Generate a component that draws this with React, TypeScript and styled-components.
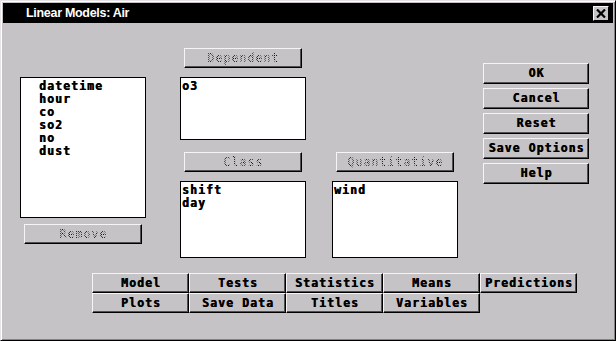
import React from "react";
import styled, { createGlobalStyle, css } from "styled-components";

const Global = createGlobalStyle`
  html, body { margin: 0; padding: 0; background: #c6c3c6; }
  * { box-sizing: border-box; }
`;

const FACE = "#c6c3c6";
const MONO = `"DejaVu Sans Mono", "Liberation Mono", monospace`;

const heavy = css`
  font-weight: bold;
  text-shadow: 0.6px 0 0 #000;
`;

const Window = styled.div`
  width: 616px;
  height: 341px;
  background: ${FACE};
  border-style: solid;
  border-width: 1px;
  border-color: #e7e3e7 #000 #000 #e7e3e7;
  box-shadow: inset 1px 1px 0 #ffffff, inset -1px -1px 0 #848284;
  padding: 2px;
  display: flex;
  flex-direction: column;
`;

const TitleBar = styled.div`
  height: 20px;
  background: #000;
  display: flex;
  align-items: center;
  justify-content: space-between;
  padding: 0 4px 0 23px;
`;

const Title = styled.span`
  color: #fff;
  font-family: "Liberation Sans", Arial, sans-serif;
  font-weight: bold;
  font-size: 12.5px;
  letter-spacing: -0.3px;
`;

const CloseBtn = styled.div`
  width: 16px;
  height: 15px;
  background: ${FACE};
  border-style: solid;
  border-width: 1px;
  border-color: #f7f3f7 #000 #000 #f7f3f7;
  display: flex;
  align-items: center;
  justify-content: center;
`;

const Client = styled.div`
  flex: 1;
  padding: 25px 0 0 17px;
  display: flex;
  flex-direction: column;
`;

const MainRow = styled.div`
  display: flex;
  align-items: flex-start;
`;

const Column = styled.div<{ $ml?: number; $pt?: number; $w: number }>`
  display: flex;
  flex-direction: column;
  align-items: center;
  width: ${(p) => p.$w}px;
  margin-left: ${(p) => p.$ml ?? 0}px;
  padding-top: ${(p) => p.$pt ?? 0}px;
`;

const Button = styled.div<{ $w: number; $h?: number; $mt?: number; $disabled?: boolean }>`
  width: ${(p) => p.$w}px;
  height: ${(p) => p.$h ?? 20}px;
  margin-top: ${(p) => p.$mt ?? 0}px;
  background: ${FACE};
  border-style: solid;
  border-width: 1px;
  border-color: #f7f3f7 #000 #000 #f7f3f7;
  box-shadow: inset -1px -1px 0 #525152;
  display: flex;
  align-items: center;
  justify-content: center;
  font-family: ${MONO};
  font-size: 11.5px;
  letter-spacing: 1.07px;
  padding-left: 1px;
  line-height: 13px;
  color: #000;
  white-space: pre;
  ${(p) => (p.$disabled ? "font-weight: normal;" : heavy)}
`;

const Stipple = styled.span`
  background: repeating-conic-gradient(#1a191a 0 25%, transparent 0 50%) 0 0 / 2px 2px;
  -webkit-background-clip: text;
  background-clip: text;
  color: transparent;
`;

const ListBox = styled.div<{ $h: number; $mt?: number; $indent?: number }>`
  width: 126px;
  height: ${(p) => p.$h}px;
  margin-top: ${(p) => p.$mt ?? 0}px;
  background: #fff;
  border: 1px solid #000;
  padding: 2px 0 0 ${(p) => p.$indent ?? 1}px;
  font-family: ${MONO};
  font-size: 11.5px;
  letter-spacing: 1.07px;
  line-height: 13px;
  color: #000;
  ${heavy}
`;

const Item = styled.div`
  white-space: pre;
`;

const Tabs = styled.div`
  margin: 15px 0 0 72px;
  display: grid;
  grid-template-columns: repeat(5, 97px);
  grid-auto-rows: 20px;
`;

const leftVars = ["datetime", "hour", "co", "so2", "no", "dust"];
const actions = ["OK", "Cancel", "Reset", "Save Options", "Help"];
const tabs = ["Model", "Tests", "Statistics", "Means", "Predictions", "Plots", "Save Data", "Titles", "Variables"];

export default function App() {
  return (
    <>
      <Global />
      <Window>
        <TitleBar>
          <Title>Linear Models: Air</Title>
          <CloseBtn>
            <svg width="10" height="9" viewBox="0 0 10 9">
              <path d="M1 0.5 L9 8.5 M9 0.5 L1 8.5" stroke="#000" strokeWidth="2.2" />
            </svg>
          </CloseBtn>
        </TitleBar>
        <Client>
          <MainRow>
            <Column $w={126} $pt={29}>
              <ListBox $h={141} $indent={18}>
                {leftVars.map((v) => (
                  <Item key={v}>{v}</Item>
                ))}
              </ListBox>
              <Button $w={118} $mt={6} $disabled>
                <Stipple>Remove</Stipple>
              </Button>
            </Column>
            <Column $w={126} $ml={34}>
              <Button $w={118} $disabled>
                <Stipple>Dependent</Stipple>
              </Button>
              <ListBox $h={63} $mt={9}>
                <Item>o3</Item>
              </ListBox>
              <Button $w={118} $mt={12} $disabled>
                <Stipple>Class</Stipple>
              </Button>
              <ListBox $h={77} $mt={9}>
                <Item>shift</Item>
                <Item>day</Item>
              </ListBox>
            </Column>
            <Column $w={126} $ml={26} $pt={104}>
              <Button $w={118} $disabled>
                <Stipple>Quantitative</Stipple>
              </Button>
              <ListBox $h={77} $mt={9}>
                <Item>wind</Item>
              </ListBox>
            </Column>
            <Column $w={106} $ml={25} $pt={15}>
              {actions.map((a, i) => (
                <Button key={a} $w={106} $h={21} $mt={i === 0 ? 0 : 4}>
                  {a}
                </Button>
              ))}
            </Column>
          </MainRow>
          <Tabs>
            {tabs.map((t) => (
              <Button key={t} $w={97}>
                {t}
              </Button>
            ))}
          </Tabs>
        </Client>
      </Window>
    </>
  );
}
